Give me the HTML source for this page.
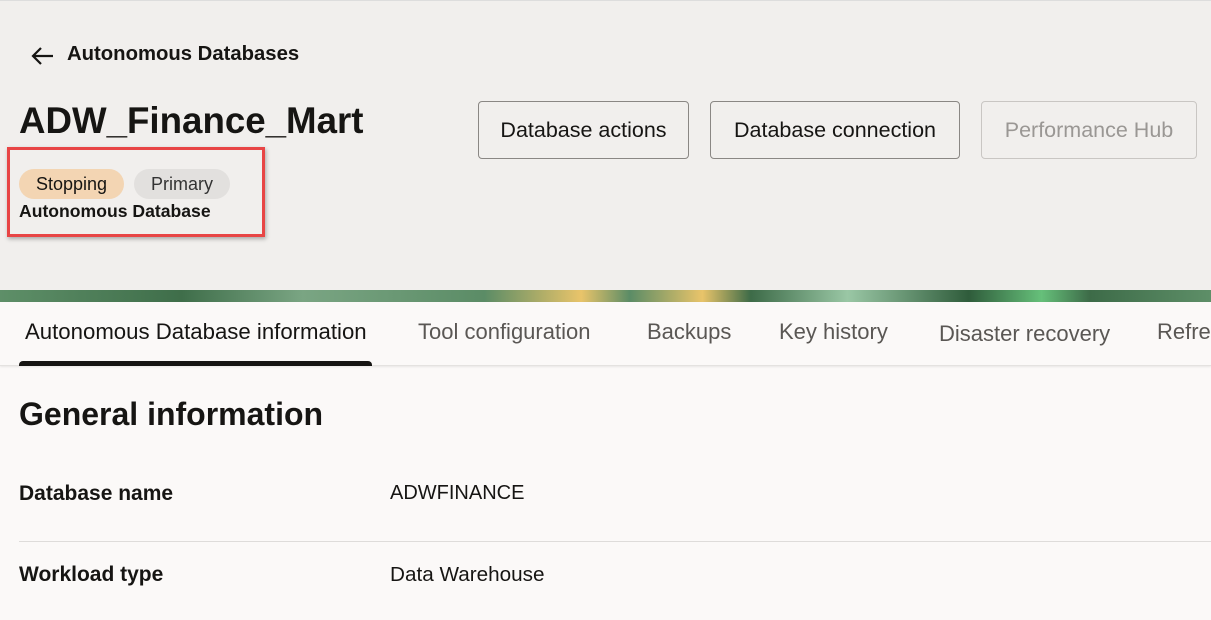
<!DOCTYPE html>
<html><head><style>
*{margin:0;padding:0;box-sizing:border-box}
body{width:1211px;height:620px;overflow:hidden;background:#fbf9f8;font-family:"Liberation Sans",sans-serif;color:#161513;position:relative}
.hdr{position:absolute;left:0;top:0;width:1211px;height:290px;background:#f1efed;border-top:1px solid #ddd}
.abs{position:absolute;white-space:nowrap}
.btn{position:absolute;top:101px;height:58px;border:1px solid #8a8784;border-radius:4px;font-size:21.5px;display:flex;align-items:center;justify-content:center;background:#f1efed}
.stripe{position:absolute;left:0;top:290px;width:1211px;height:12px;background:linear-gradient(90deg,#5e8f68 0%,#3f6e4a 15%,#7aa583 25%,#5b8c66 40%,#e9c46a 48%,#5b8c66 52%,#e9c46a 58%,#3d6b48 62%,#9ac7a5 70%,#2f5c3b 80%,#66c07a 86%,#3d6b48 90%,#5e8f68 100%)}
.tabs{position:absolute;left:0;top:302px;width:1211px;height:64px;background:#fbf9f8;border-bottom:1px solid #e4e2e0;box-shadow:0 1px 2px rgba(0,0,0,.08)}
.tab{position:absolute;top:17px;font-size:22px;color:#5a5754}
.row{position:absolute;font-size:20.5px}
</style></head><body>
<div class="hdr"></div>
<svg class="abs" style="left:30px;top:45px" width="26" height="22" viewBox="0 0 26 22"><path d="M23 11H4M11 3L3 11l8 8" stroke="#161513" stroke-width="2.2" fill="none"/></svg>
<div class="abs" style="left:67px;top:43px;font-size:20.3px;font-weight:bold">Autonomous Databases</div>
<div class="abs" style="left:19px;top:100px;font-size:36.7px;font-weight:bold">ADW_Finance_Mart</div>
<div class="btn" style="left:478px;width:211px">Database actions</div>
<div class="btn" style="left:710px;width:250px">Database connection</div>
<div class="btn" style="left:981px;width:216px;color:#9a9794;border-color:#c9c6c3">Performance Hub</div>
<div class="abs" style="left:19px;top:169px;width:105px;height:30px;border-radius:15px;background:#f3d5b3;font-size:18px;text-align:center;line-height:30px">Stopping</div>
<div class="abs" style="left:134px;top:169px;width:96px;height:30px;border-radius:15px;background:#e2e0de;font-size:18px;text-align:center;line-height:30px;color:#333">Primary</div>
<div class="abs" style="left:19px;top:201px;font-size:17.6px;font-weight:bold">Autonomous Database</div>
<div class="abs" style="left:7px;top:147px;width:258px;height:90px;border:3px solid #e84545;box-shadow:1px 2px 4px rgba(0,0,0,.3)"></div>
<div class="stripe"></div>
<div class="tabs">
<div class="tab" style="left:25px;color:#161513;font-size:22.2px">Autonomous Database information</div>
<div style="position:absolute;left:19px;top:59px;width:353px;height:5px;background:#161513;border-radius:4px 4px 0 0"></div>
<div class="tab" style="left:418px">Tool configuration</div>
<div class="tab" style="left:647px">Backups</div>
<div class="tab" style="left:779px">Key history</div>
<div class="tab" style="left:939px;top:19px">Disaster recovery</div>
<div class="tab" style="left:1157px">Refresh</div>
</div>
<div class="abs" style="left:19px;top:396px;font-size:32px;font-weight:bold">General information</div>
<div class="row" style="left:19px;top:482px;font-weight:bold;font-size:21px">Database name</div>
<div class="row" style="left:390px;top:482px;font-size:20px">ADWFINANCE</div>
<div class="abs" style="left:19px;top:541px;width:1192px;height:1px;background:#dedcda"></div>
<div class="row" style="left:19px;top:563px;font-weight:bold;font-size:21px">Workload type</div>
<div class="row" style="left:390px;top:563px;font-size:20.7px">Data Warehouse</div>
</body></html>
